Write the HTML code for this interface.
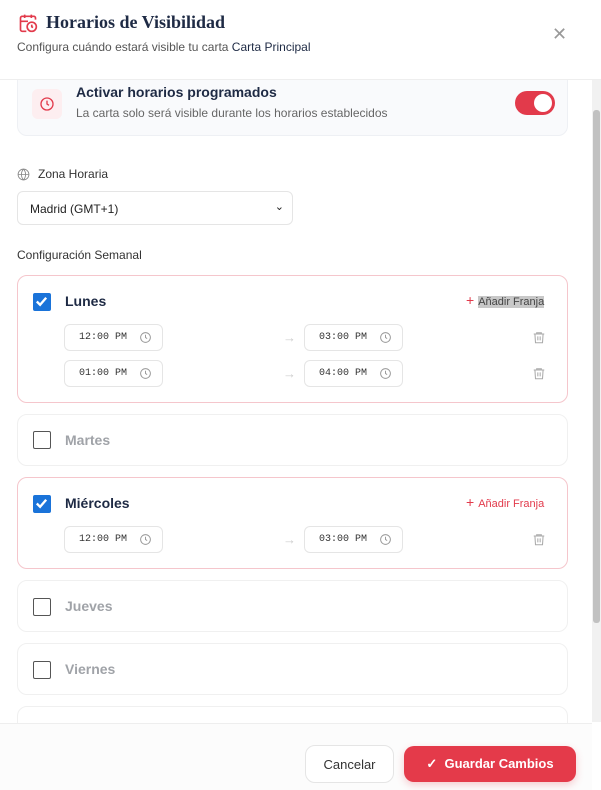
<!DOCTYPE html>
<html><head><meta charset="utf-8"><style>
*{box-sizing:border-box;margin:0;padding:0}
body{width:601px;height:790px;overflow:hidden;background:#fff;font-family:"Liberation Sans",sans-serif;position:relative;color:#1e2a44}
.hdr{position:absolute;left:0;top:0;width:601px;height:80px;border-bottom:1px solid #eee;background:#fff}
.title{position:absolute;left:46px;top:12px;font-family:"Liberation Serif",serif;font-weight:bold;font-size:18px;color:#1e2a44}
.sub{position:absolute;left:17px;top:40px;font-size:12px;color:#555}
.sub b{font-weight:normal;color:#1e2a44}
.close{position:absolute;left:552px;top:24px;font-size:18px;color:#999}
.card{position:absolute;left:17px;width:551px;border:1px solid #f0f0f0;border-radius:10px;background:#fff}
.card.on{border-color:#f5c6cc}
.cb{position:absolute;left:15px;width:18px;height:18px;border:1.5px solid #555;border-radius:2px;background:#fff}
.cb.chk{background:#1a73d9;border-color:#1a73d9}
.day{position:absolute;left:47px;font-size:14px;font-weight:bold;color:#a0a3a8}
.on .day{color:#1e2a44}
.add{position:absolute;left:448px;font-size:11px;color:#444}
.add span{color:#e23a4b;font-size:14px;margin-right:4px}
.time{position:absolute;width:99px;height:27px;border:1px solid #e5e5e5;border-radius:6px;font-family:"Liberation Mono",monospace;font-size:10px;color:#333;padding:7px 0 0 14px}
.time svg{position:absolute;right:10px;top:6px}
.arr{position:absolute;left:265px;color:#ccc;font-size:13px}
.trash{position:absolute;left:514px}
.sb{position:absolute;left:592px;top:80px;width:9px;height:642px;background:#f1f1f1}
.sb div{position:absolute;left:1px;top:30px;width:7px;height:513px;background:#c1c1c1;border-radius:3px}
.ftr{position:absolute;left:0;top:723px;width:592px;height:67px;background:#fcfcfc;border-top:1px solid #eee}
</style></head><body>
<div class="sb"><div></div></div>
<div class="card" style="top:70px;height:66px;background:#f9fafc;border-color:#eef0f4">
 <div style="position:absolute;left:14px;top:18px;width:30px;height:30px;background:#fdeef0;border-radius:6px"></div>
 <svg style="position:absolute;left:21px;top:25px" width="16" height="16" viewBox="0 0 24 24" fill="none" stroke="#e23a4b" stroke-width="2"><circle cx="12" cy="12" r="9"/><path d="M12 7v5l3 2"/></svg>
 <div style="position:absolute;left:58px;top:13px;font-size:14px;font-weight:bold">Activar horarios programados</div>
 <div style="position:absolute;left:58px;top:35px;font-size:12px;color:#666">La carta solo será visible durante los horarios establecidos</div>
 <div style="position:absolute;left:497px;top:20px;width:40px;height:24px;border-radius:12px;background:#e23a4b"><div style="position:absolute;right:3px;top:3px;width:18px;height:18px;border-radius:9px;background:#fff"></div></div>
</div>
<div class="hdr">
 <svg style="position:absolute;left:18px;top:12px" width="20" height="22" viewBox="0 0 24 24" fill="none" stroke="#e23a4b" stroke-width="2"><path d="M8 2v4M16 2v4M3 10h9M21 8V6a2 2 0 0 0-2-2H5a2 2 0 0 0-2 2v14a2 2 0 0 0 2 2h5"/><circle cx="16.5" cy="16.5" r="5.5"/><path d="M16.5 14v2.5l1.5 1"/></svg>
 <div class="title">Horarios de Visibilidad</div>
 <div class="sub">Configura cuándo estará visible tu carta <b>Carta Principal</b></div>
 <div class="close">✕</div>
</div>
<svg style="position:absolute;left:17px;top:168px" width="13" height="13" viewBox="0 0 24 24" fill="none" stroke="#888" stroke-width="1.6"><circle cx="12" cy="12" r="10"/><path d="M2 12h20M12 2a15 15 0 0 1 0 20M12 2a15 15 0 0 0 0 20"/></svg>
<div style="position:absolute;left:38px;top:167px;font-size:12px;color:#333">Zona Horaria</div>
<div style="position:absolute;left:17px;top:191px;width:276px;height:34px;border:1px solid #e5e5e5;border-radius:6px;font-size:12px;padding:10px 0 0 12px;color:#222">Madrid (GMT+1)<span style="position:absolute;right:8px;top:8px;font-size:11px">⌄</span></div>
<div style="position:absolute;left:17px;top:248px;font-size:12px;color:#333">Configuración Semanal</div>

<div class="card on" style="top:275px;height:128px">
 <div class="cb chk" style="top:17px"><svg width="15" height="15" viewBox="0 0 16 16"><path d="M3 8l3.5 3.5L13 4" stroke="#fff" stroke-width="2.5" fill="none"/></svg></div>
 <div class="day" style="top:17px">Lunes</div>
 <div class="add" style="top:16px"><span>+</span><i style="font-style:normal;background:#c8c8c8">Añadir Franja</i></div>
 <div class="time" style="left:46px;top:48px">12:00 PM<svg width="13" height="13" viewBox="0 0 24 24" fill="none" stroke="#999" stroke-width="1.8"><circle cx="12" cy="12" r="9"/><path d="M12 7v5l3 2"/></svg></div>
 <span class="arr" style="top:54px">→</span>
 <div class="time" style="left:286px;top:48px">03:00 PM<svg width="13" height="13" viewBox="0 0 24 24" fill="none" stroke="#999" stroke-width="1.8"><circle cx="12" cy="12" r="9"/><path d="M12 7v5l3 2"/></svg></div>
 <svg class="trash" style="top:54px" width="14" height="15" viewBox="0 0 24 24" fill="none" stroke="#aaa" stroke-width="1.8"><path d="M3 6h18M8 6V4h8v2M5 6l1 15h12l1-15M10 10v7M14 10v7"/></svg>
 <div class="time" style="left:46px;top:84px">01:00 PM<svg width="13" height="13" viewBox="0 0 24 24" fill="none" stroke="#999" stroke-width="1.8"><circle cx="12" cy="12" r="9"/><path d="M12 7v5l3 2"/></svg></div>
 <span class="arr" style="top:90px">→</span>
 <div class="time" style="left:286px;top:84px">04:00 PM<svg width="13" height="13" viewBox="0 0 24 24" fill="none" stroke="#999" stroke-width="1.8"><circle cx="12" cy="12" r="9"/><path d="M12 7v5l3 2"/></svg></div>
 <svg class="trash" style="top:90px" width="14" height="15" viewBox="0 0 24 24" fill="none" stroke="#aaa" stroke-width="1.8"><path d="M3 6h18M8 6V4h8v2M5 6l1 15h12l1-15M10 10v7M14 10v7"/></svg>
</div>

<div class="card" style="top:414px;height:52px"><div class="cb" style="top:16px"></div><div class="day" style="top:17px">Martes</div></div>

<div class="card on" style="top:477px;height:92px">
 <div class="cb chk" style="top:17px"><svg width="15" height="15" viewBox="0 0 16 16"><path d="M3 8l3.5 3.5L13 4" stroke="#fff" stroke-width="2.5" fill="none"/></svg></div>
 <div class="day" style="top:17px">Miércoles</div>
 <div class="add" style="top:16px;color:#e23a4b"><span>+</span>Añadir Franja</div>
 <div class="time" style="left:46px;top:48px">12:00 PM<svg width="13" height="13" viewBox="0 0 24 24" fill="none" stroke="#999" stroke-width="1.8"><circle cx="12" cy="12" r="9"/><path d="M12 7v5l3 2"/></svg></div>
 <span class="arr" style="top:54px">→</span>
 <div class="time" style="left:286px;top:48px">03:00 PM<svg width="13" height="13" viewBox="0 0 24 24" fill="none" stroke="#999" stroke-width="1.8"><circle cx="12" cy="12" r="9"/><path d="M12 7v5l3 2"/></svg></div>
 <svg class="trash" style="top:54px" width="14" height="15" viewBox="0 0 24 24" fill="none" stroke="#aaa" stroke-width="1.8"><path d="M3 6h18M8 6V4h8v2M5 6l1 15h12l1-15M10 10v7M14 10v7"/></svg>
</div>

<div class="card" style="top:580px;height:52px"><div class="cb" style="top:17px"></div><div class="day" style="top:17px">Jueves</div></div>
<div class="card" style="top:643px;height:52px"><div class="cb" style="top:17px"></div><div class="day" style="top:17px">Viernes</div></div>
<div class="card" style="top:706px;height:52px"></div>

<div class="ftr">
 <div style="position:absolute;left:305px;top:21px;width:89px;height:38px;border:1px solid #e5e5e5;border-radius:10px;background:#fff;font-size:13px;color:#333;text-align:center;padding-top:11px">Cancelar</div>
 <div style="position:absolute;left:404px;top:22px;width:172px;height:36px;border-radius:10px;background:#e43a4a;color:#fff;font-size:13px;font-weight:bold;text-align:center;padding-top:10px;box-shadow:0 3px 8px rgba(228,58,74,.25)">✓&nbsp; Guardar Cambios</div>
</div>
</body></html>
